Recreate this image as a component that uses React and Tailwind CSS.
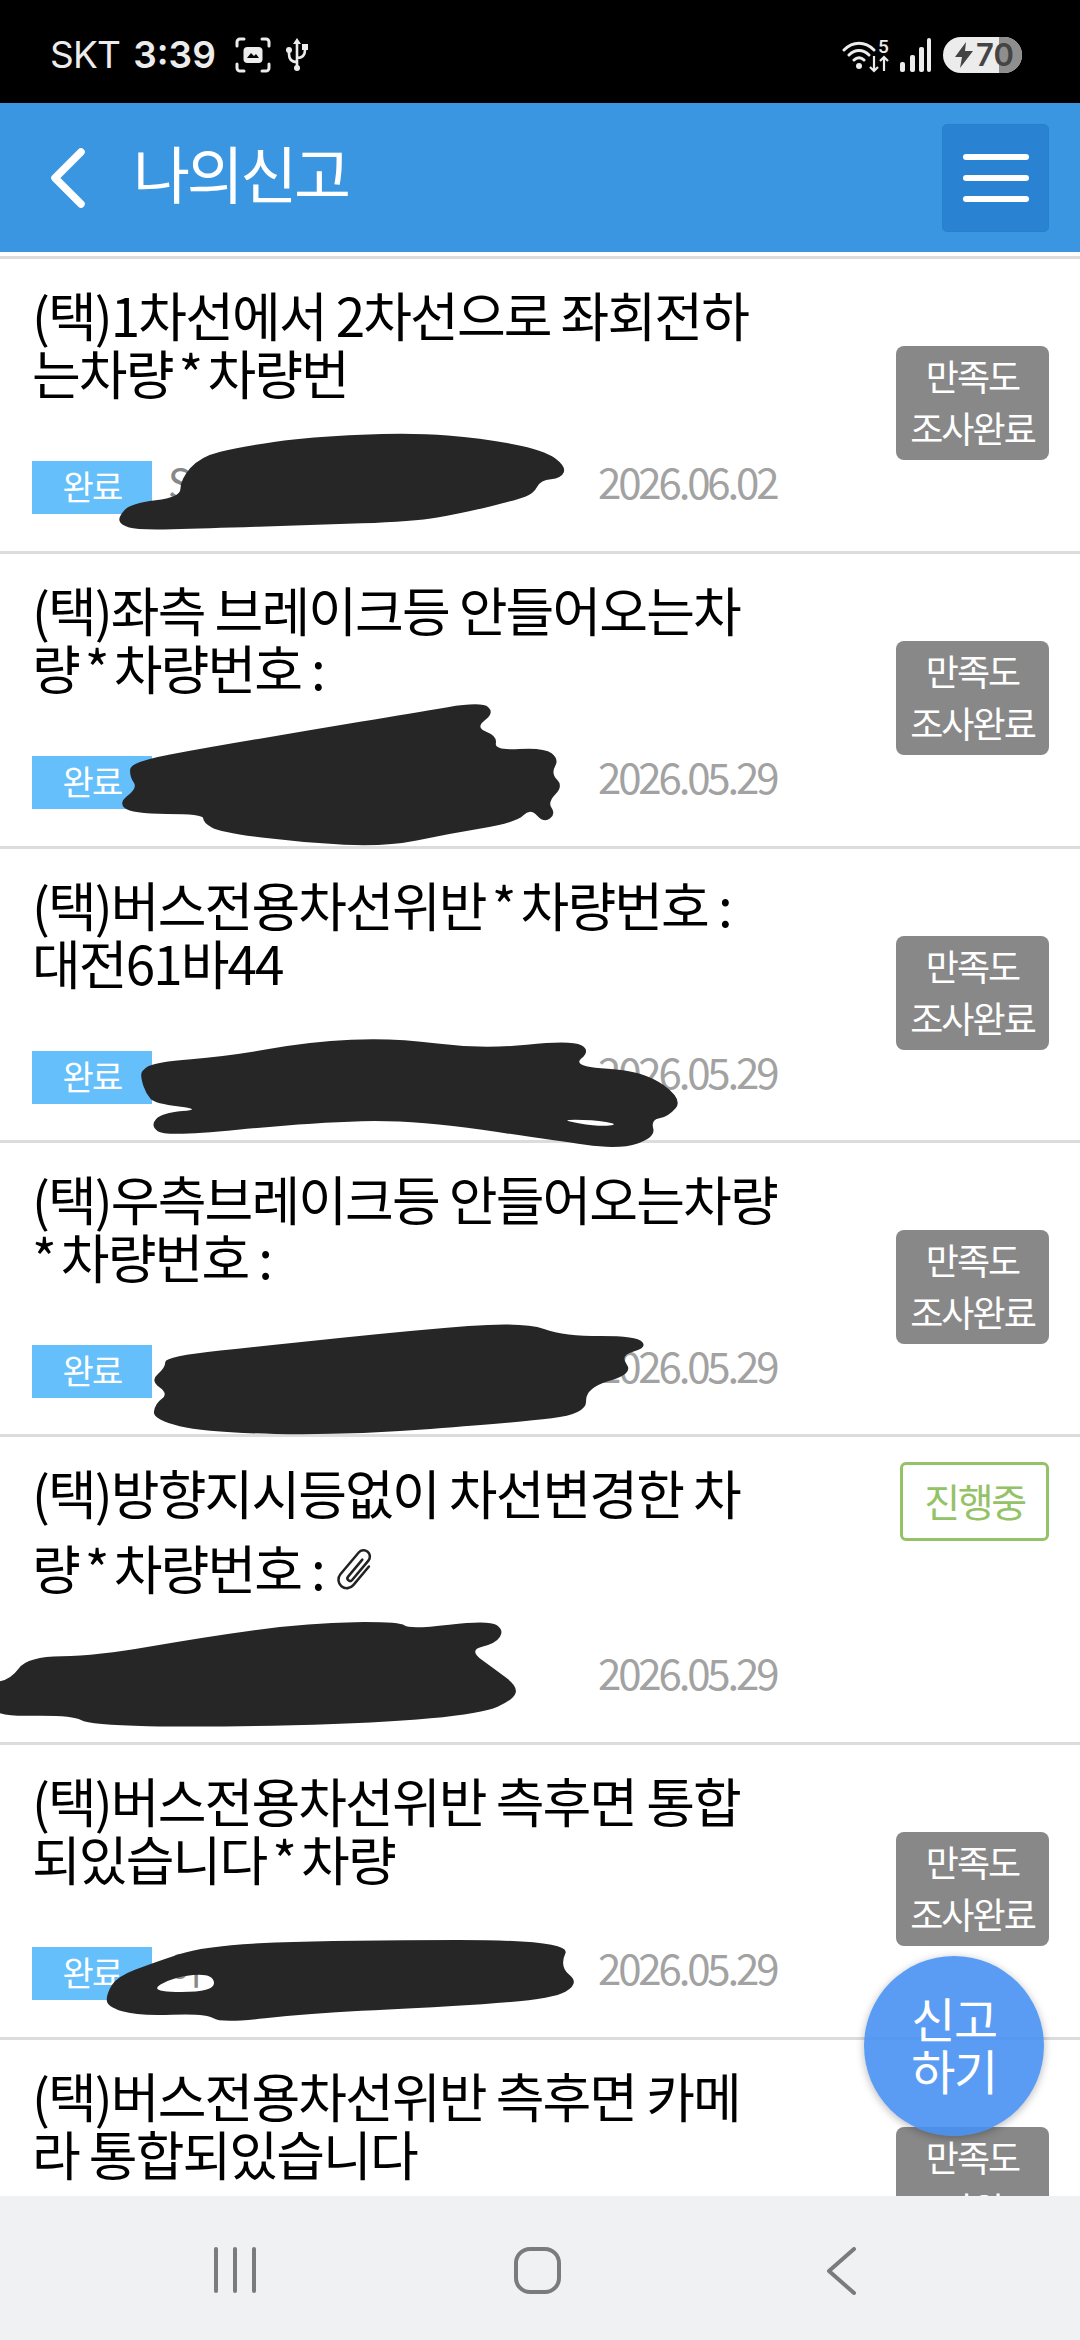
const FONT = { fontFamily: '"Noto Sans CJK KR", "Noto Sans", sans-serif' };

// blob outline -> smooth closed path
function smooth(points) {
  const mid = (a, b) => [(a[0] + b[0]) / 2, (a[1] + b[1]) / 2];
  const start = mid(points[points.length - 1], points[0]);
  let d = `M${start[0]} ${start[1]}`;
  points.forEach((p, i) => {
    const m = mid(p, points[(i + 1) % points.length]);
    d += ` Q${p[0]} ${p[1]} ${m[0]} ${m[1]}`;
  });
  return d + " Z";
}

const z6 = (pts) => pts.map(([x, y]) => [x / 1.452, 560 + y / 1.733]);
const z3 = (base) => (pts) => pts.map(([x, y]) => [x / 1.452, base + y / 3]);

const scribbles = [
  [z3(250)([[172, 800], [190, 760], [262, 742], [262, 690], [290, 620], [350, 590], [450, 560], [600, 548], [700, 565], [790, 600], [822, 650], [815, 685], [785, 690], [775, 730], [750, 750], [670, 790], [600, 815], [450, 825], [300, 835], [200, 840], [175, 825]])],
  [z6([[190, 350], [300, 325], [450, 295], [600, 265], [700, 245], [718, 265], [690, 290], [722, 305], [718, 330], [790, 325], [812, 345], [800, 370], [818, 392], [795, 420], [807, 440], [790, 456], [770, 430], [750, 455], [650, 475], [560, 497], [440, 490], [320, 472], [295, 455], [295, 440], [190, 440], [172, 420], [200, 395], [188, 375]])],
  [
    z6([[205, 885], [225, 870], [330, 860], [450, 835], [570, 828], [700, 848], [830, 832], [858, 850], [830, 878], [935, 885], [992, 935], [970, 965], [945, 970], [952, 1000], [900, 1022], [800, 1005], [600, 970], [450, 975], [240, 1000], [218, 980], [235, 958], [295, 952], [225, 942], [212, 925], [205, 900]]),
    z6([[810, 970], [860, 970], [900, 978], [870, 982]]),
  ],
  [z6([[240, 1380], [400, 1360], [600, 1335], [760, 1320], [820, 1345], [925, 1345], [940, 1365], [900, 1378], [920, 1410], [850, 1435], [852, 1480], [750, 1495], [500, 1517], [300, 1512], [222, 1490], [225, 1462], [245, 1445], [218, 1422], [240, 1400]])],
  [z3(1430)([[-20, 760], [15, 750], [40, 680], [140, 678], [300, 620], [450, 578], [580, 575], [595, 598], [710, 570], [732, 600], [720, 640], [680, 660], [720, 720], [752, 770], [745, 810], [700, 850], [550, 880], [300, 892], [130, 885], [105, 855], [-20, 860]])],
  [
    z3(1950)([[155, 130], [170, 80], [220, 40], [300, -15], [500, -30], [830, -30], [812, 50], [842, 100], [800, 150], [600, 175], [450, 190], [320, 220], [300, 190], [200, 198], [155, 170]]),
    [[148, 1992], [173, 1977], [213, 1973], [215, 1992]],
  ],
];

const rows = [
  { lines: ["(택)1차선에서 2차선으로 좌회전하", "는차량*차량번"], owner: "S", date: "2026.06.02", top: 259, h: 295 },
  { lines: ["(택)좌측 브레이크등 안들어오는차", "량*차량번호 :"], date: "2026.05.29", top: 554, h: 295 },
  { lines: ["(택)버스전용차선위반*차량번호 :", "대전61바44"], date: "2026.05.29", top: 849, h: 294 },
  { lines: ["(택)우측브레이크등 안들어오는차량", "*차량번호 :"], date: "2026.05.29", top: 1143, h: 294 },
  { lines: ["(택)방향지시등없이 차선변경한 차", "량*차량번호 :"], date: "2026.05.29", top: 1437, h: 308, ongoing: true },
  { lines: ["(택)버스전용차선위반 측후면 통합", "되있습니다*차량"], owner: "아", date: "2026.05.29", top: 1745, h: 295 },
  { lines: ["(택)버스전용차선위반 측후면 카메", "라 통합되있습니다"], date: "2026.05.29", top: 2040, h: 295 },
];

function Redaction({ index, top, h }) {
  const shapes = scribbles[index];
  if (!shapes) return null;
  const [outer, hole] = shapes;
  return (
    <svg
      className="absolute left-0 top-0 overflow-visible"
      width="1080"
      height={h}
      viewBox={`0 ${top} 1080 ${h}`}
    >
      <path
        d={smooth(outer) + (hole ? " " + smooth(hole) : "")}
        fill="#262626"
        fillRule="evenodd"
      />
    </svg>
  );
}

// the star sits wider than the font's own glyph
function TitleLine({ text }) {
  const parts = text.split("*");
  return (
    <>
      {parts.map((part, i) => (
        <span key={i}>
          {i > 0 && <span className={i === 1 && !parts[0] ? "mr-[6px]" : "mx-[6px]"}>*</span>}
          {part}
        </span>
      ))}
    </>
  );
}

function ClipIcon() {
  return (
    <svg className="ml-[12px] mt-[6px] rotate-[40deg]" width="38" height="52" viewBox="0 0 36 48" fill="none" stroke="#222" strokeWidth="2.4" strokeLinecap="round">
      <path d="M17 12V33a2.5 2.5 0 0 0 5 0V9a6 6 0 0 0-12 0V36a8 8 0 0 0 16 0V13" />
    </svg>
  );
}

function ReportRow({ row, index }) {
  const { lines, date, ongoing, top, h, owner } = row;
  return (
    <div className="relative flex shrink-0 border-b-[3px] border-[#dcdcdc] pl-[32px] pr-[31px]" style={{ height: h }}>
      <div className="w-[770px] shrink-0 pt-[26px]">
        <div className="whitespace-nowrap text-[53px] leading-[58px] tracking-[-0.036em] text-black">
          <TitleLine text={lines[0]} />
        </div>
        {ongoing ? (
          <div className="mt-[14px] flex items-center whitespace-nowrap text-[53px] leading-[64px] tracking-[-0.036em] text-black">
            <span>
              <TitleLine text={lines[1]} />
            </span>
            <ClipIcon />
          </div>
        ) : (
          <div className="whitespace-nowrap text-[53px] leading-[58px] tracking-[-0.036em] text-black">
            <TitleLine text={lines[1]} />
          </div>
        )}
        <div className={`flex items-center ${ongoing ? "mt-[52px]" : "mt-[59px]"}`}>
          {ongoing ? (
            <div className="h-[53px] w-[120px]" />
          ) : (
            <div className="flex h-[53px] w-[120px] items-center justify-center bg-[#65bffb] pb-[3px] text-[34px] tracking-[-0.05em] text-white">
              완료
            </div>
          )}
          <span className="mb-[12px] w-[446px] pl-[16px] text-[40px] leading-none text-[#888]">{owner}</span>
          <span className="mb-[12px] text-[42px] leading-none tracking-[-0.075em] text-[#a2a2a2]">{date}</span>
        </div>
      </div>
      <div className="ml-auto">
        {ongoing ? (
          <div className="mt-[25px] flex h-[79px] w-[149px] items-center justify-center rounded-[6px] border-[3px] border-[#94c267] pb-[3px] text-[39px] tracking-[-0.06em] text-[#94c267]">
            진행중
          </div>
        ) : (
          <div className="mt-[87px] flex h-[114px] w-[153px] flex-col items-center justify-center rounded-[8px] bg-[#888888] pb-[4px] text-[36px] leading-[52px] tracking-[-0.055em] text-white">
            <span>만족도</span>
            <span>조사완료</span>
          </div>
        )}
      </div>
      <Redaction index={index} top={top} h={h} />
    </div>
  );
}

function StatusBar() {
  return (
    <div className="flex h-[103px] shrink-0 items-center justify-between bg-black pl-[50px] pr-[58px] pt-[6px] text-[#ececec]">
      <div className="flex items-center">
        <span className="text-[37px] leading-none tracking-[-0.02em]" style={{ fontFamily: "Inter, sans-serif" }}>SKT</span>
        <span className="ml-[13px] text-[37px] font-semibold leading-none" style={{ fontFamily: "Inter, sans-serif" }}>3:39</span>
        <svg className="ml-[19px]" width="36" height="36" viewBox="0 0 36 36" fill="none">
          <path d="M9 2H5a3 3 0 0 0-3 3v4M27 2h4a3 3 0 0 1 3 3v4M9 34H5a3 3 0 0 1-3-3v-4M27 34h4a3 3 0 0 0 3-3v-4" stroke="#ececec" strokeWidth="3" strokeLinecap="round" />
          <rect x="8.5" y="10" width="19" height="16" rx="4" fill="#ececec" />
          <path d="M12 21l4-5 3 3 2-2 3 4z" fill="#000" />
        </svg>
        <svg className="ml-[14px]" width="24" height="34" viewBox="0 0 24 34" fill="none" stroke="#ececec" strokeWidth="2.6">
          <path d="M12 32V4M12 24c-6 0-8-3-8-8v-3M12 20c6 0 8-3 8-8V9" />
          <circle cx="12" cy="30" r="3" fill="#ececec" stroke="none" />
          <path d="M12 0l4 6H8z" fill="#ececec" stroke="none" />
          <circle cx="4" cy="12" r="3" fill="#ececec" stroke="none" />
          <rect x="17" y="6" width="6" height="6" fill="#ececec" stroke="none" />
        </svg>
      </div>
      <div className="flex items-center">
        <svg width="34" height="30" viewBox="0 0 34 30" fill="none" stroke="#ececec" strokeWidth="3" strokeLinecap="round">
          <path d="M2 10c9-9 21-9 30 0M7 15c6-6 14-6 20 0M12 20c3-3 7-3 10 0" />
          <circle cx="17" cy="26" r="3" fill="#ececec" stroke="none" />
        </svg>
        <div className="relative -ml-[6px] h-[34px] w-[20px]">
          <span className="absolute -top-[1px] left-[8px] text-[19px] font-medium leading-none" style={{ fontFamily: "Roboto, sans-serif" }}>5</span>
          <svg className="absolute left-[-2px] top-[17px]" width="22" height="18" viewBox="0 0 22 18" fill="none" stroke="#ececec" strokeWidth="2.2">
            <path d="M6 1v15M2 12l4 4 4-4M16 16V2M12 6l4-4 4 4" />
          </svg>
        </div>
        <svg className="ml-[10px]" width="31" height="34" viewBox="0 0 31 34" fill="#ececec">
          <rect x="0" y="24" width="5" height="10" rx="2" />
          <rect x="10" y="17" width="5" height="17" rx="2" />
          <rect x="19" y="9" width="5" height="25" rx="2" />
          <rect x="27" y="0" width="4" height="34" rx="2" />
        </svg>
        <div className="relative ml-[12px] flex h-[36px] w-[79px] items-center overflow-hidden rounded-full bg-[#ececec]">
          <div className="absolute right-0 top-0 h-full w-[23px] bg-[#8e8e8e]" />
          <svg className="relative ml-[11px]" width="20" height="26" viewBox="0 0 20 26" fill="#444">
            <path d="M12 0L1 15h7l-2 11 13-17h-8z" />
          </svg>
          <span className="relative ml-[2px] text-[31px] font-semibold leading-none text-[#444]" style={{ fontFamily: "Inter, sans-serif" }}>70</span>
        </div>
      </div>
    </div>
  );
}

function Header() {
  return (
    <div className="flex h-[149px] shrink-0 items-center justify-between bg-[#3a96e0] pl-[50px] pr-[31px]">
      <div className="flex items-center">
        <svg width="36" height="60" viewBox="0 0 36 60" fill="none" stroke="#fff" strokeWidth="7.5" strokeLinecap="round" strokeLinejoin="round">
          <path d="M31 4L5 30l26 26" />
        </svg>
        <span className="mb-[12px] ml-[47px] text-[62px] leading-none tracking-[-0.055em] text-white">나의신고</span>
      </div>
      <button type="button" className="flex h-[108px] w-[107px] flex-col items-center justify-center gap-[15px] rounded-[5px] border border-[#2a7fcb] bg-[#2a83d2]">
        <span className="h-[6px] w-[66px] rounded-full bg-white" />
        <span className="h-[6px] w-[66px] rounded-full bg-white" />
        <span className="h-[6px] w-[66px] rounded-full bg-white" />
      </button>
    </div>
  );
}

function NavBar() {
  return (
    <div className="flex h-[144px] shrink-0 items-start bg-[#f0f1f3] pt-[51px]">
      <div className="ml-[214px] flex h-[46px] gap-[15px]">
        <span className="h-full w-[4px] rounded-full bg-[#7b7b7f]" />
        <span className="h-full w-[4px] rounded-full bg-[#7b7b7f]" />
        <span className="h-full w-[4px] rounded-full bg-[#7b7b7f]" />
      </div>
      <div className="ml-[258px] h-[47px] w-[47px] rounded-[16px] border-[4px] border-[#7b7b7f]" />
      <svg className="ml-[264px]" width="32" height="48" viewBox="0 0 32 48" fill="none" stroke="#7b7b7f" strokeWidth="4" strokeLinecap="round" strokeLinejoin="round">
        <path d="M29 2L4 24l25 22" />
      </svg>
    </div>
  );
}

export default function App() {
  return (
    <div className="relative flex h-[2340px] w-[1080px] flex-col overflow-hidden bg-white" style={FONT}>
      <StatusBar />
      <Header />
      <div className="h-[4px] shrink-0 bg-white" />
      <div className="h-[3px] shrink-0 bg-[#dcdcdc]" />
      <div className="min-h-0 flex-1 overflow-hidden">
        {rows.map((row, i) => (
          <ReportRow key={i} row={row} index={i} />
        ))}
      </div>
      <NavBar />
      <button
        type="button"
        className="absolute left-[864px] top-[1956px] flex h-[180px] w-[180px] flex-col items-center justify-center rounded-full bg-[#4891f2]/90 pb-[6px] text-[48px] leading-[52px] tracking-[-0.03em] text-white shadow-[0_2px_8px_rgba(0,0,0,0.28)]"
      >
        <span>신고</span>
        <span>하기</span>
      </button>
    </div>
  );
}
